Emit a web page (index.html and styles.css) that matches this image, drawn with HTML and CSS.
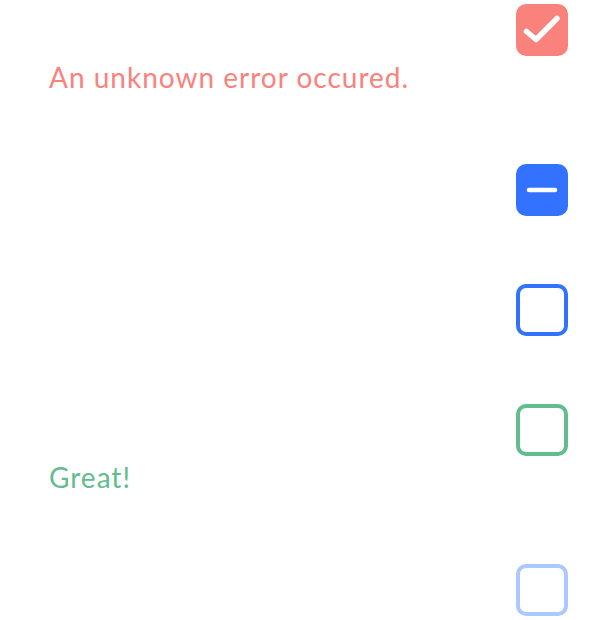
FILE: index.html
```html
<!DOCTYPE html>
<html>
<head>
<meta charset="utf-8">
<link rel="stylesheet" href="styles.css">
</head>
<body>
<div class="list">
  <div class="item">
    <div class="row">
      <span class="box box-checked">
        <svg viewBox="0 0 52 52" width="52" height="52"><path d="M10.5 27.5 L20 35.5 L41 14.5" fill="none" stroke="#fff" stroke-width="5.5" stroke-linecap="round" stroke-linejoin="round"/></svg>
      </span>
    </div>
    <div class="msg msg-error">An unknown error occured.</div>
  </div>
  <div class="item">
    <div class="row">
      <span class="box box-indeterminate">
        <svg viewBox="0 0 52 52" width="52" height="52"><path d="M13 26 L39 26" fill="none" stroke="#fff" stroke-width="4.5" stroke-linecap="round"/></svg>
      </span>
    </div>
  </div>
  <div class="item">
    <div class="row">
      <span class="box box-outline"></span>
    </div>
  </div>
  <div class="item">
    <div class="row">
      <span class="box box-success"></span>
    </div>
    <div class="msg msg-success">Great!</div>
  </div>
  <div class="item">
    <div class="row">
      <span class="box box-disabled"></span>
    </div>
  </div>
</div>
</body>
</html>
```
FILE: styles.css
```css
html, body {
  margin: 0;
  padding: 0;
  background: #fff;
}
body {
  font-family: "Lato", "Noto Sans", sans-serif;
}
.list {
  display: flex;
  flex-direction: column;
  gap: 68px;
  padding: 4px 48px 0 49px;
}
.row {
  display: flex;
  justify-content: flex-end;
}
.box {
  box-sizing: border-box;
  width: 52px;
  height: 52px;
  border-radius: 10px;
  display: block;
}
.box svg {
  display: block;
}
.box-checked {
  background: #fa827c;
}
.box-indeterminate {
  background: #3272fe;
}
.box-outline {
  border: 4.5px solid #3272fe;
}
.box-success {
  border: 4.5px solid #62bd8e;
}
.box-disabled {
  border: 4.5px solid #adc8fe;
}
.msg {
  font-size: 28px;
  line-height: 38px;
  padding-top: 2px;
  letter-spacing: 1px;
}
.msg-error {
  color: #fa827c;
}
.msg-success {
  color: #62bd8e;
}
```
